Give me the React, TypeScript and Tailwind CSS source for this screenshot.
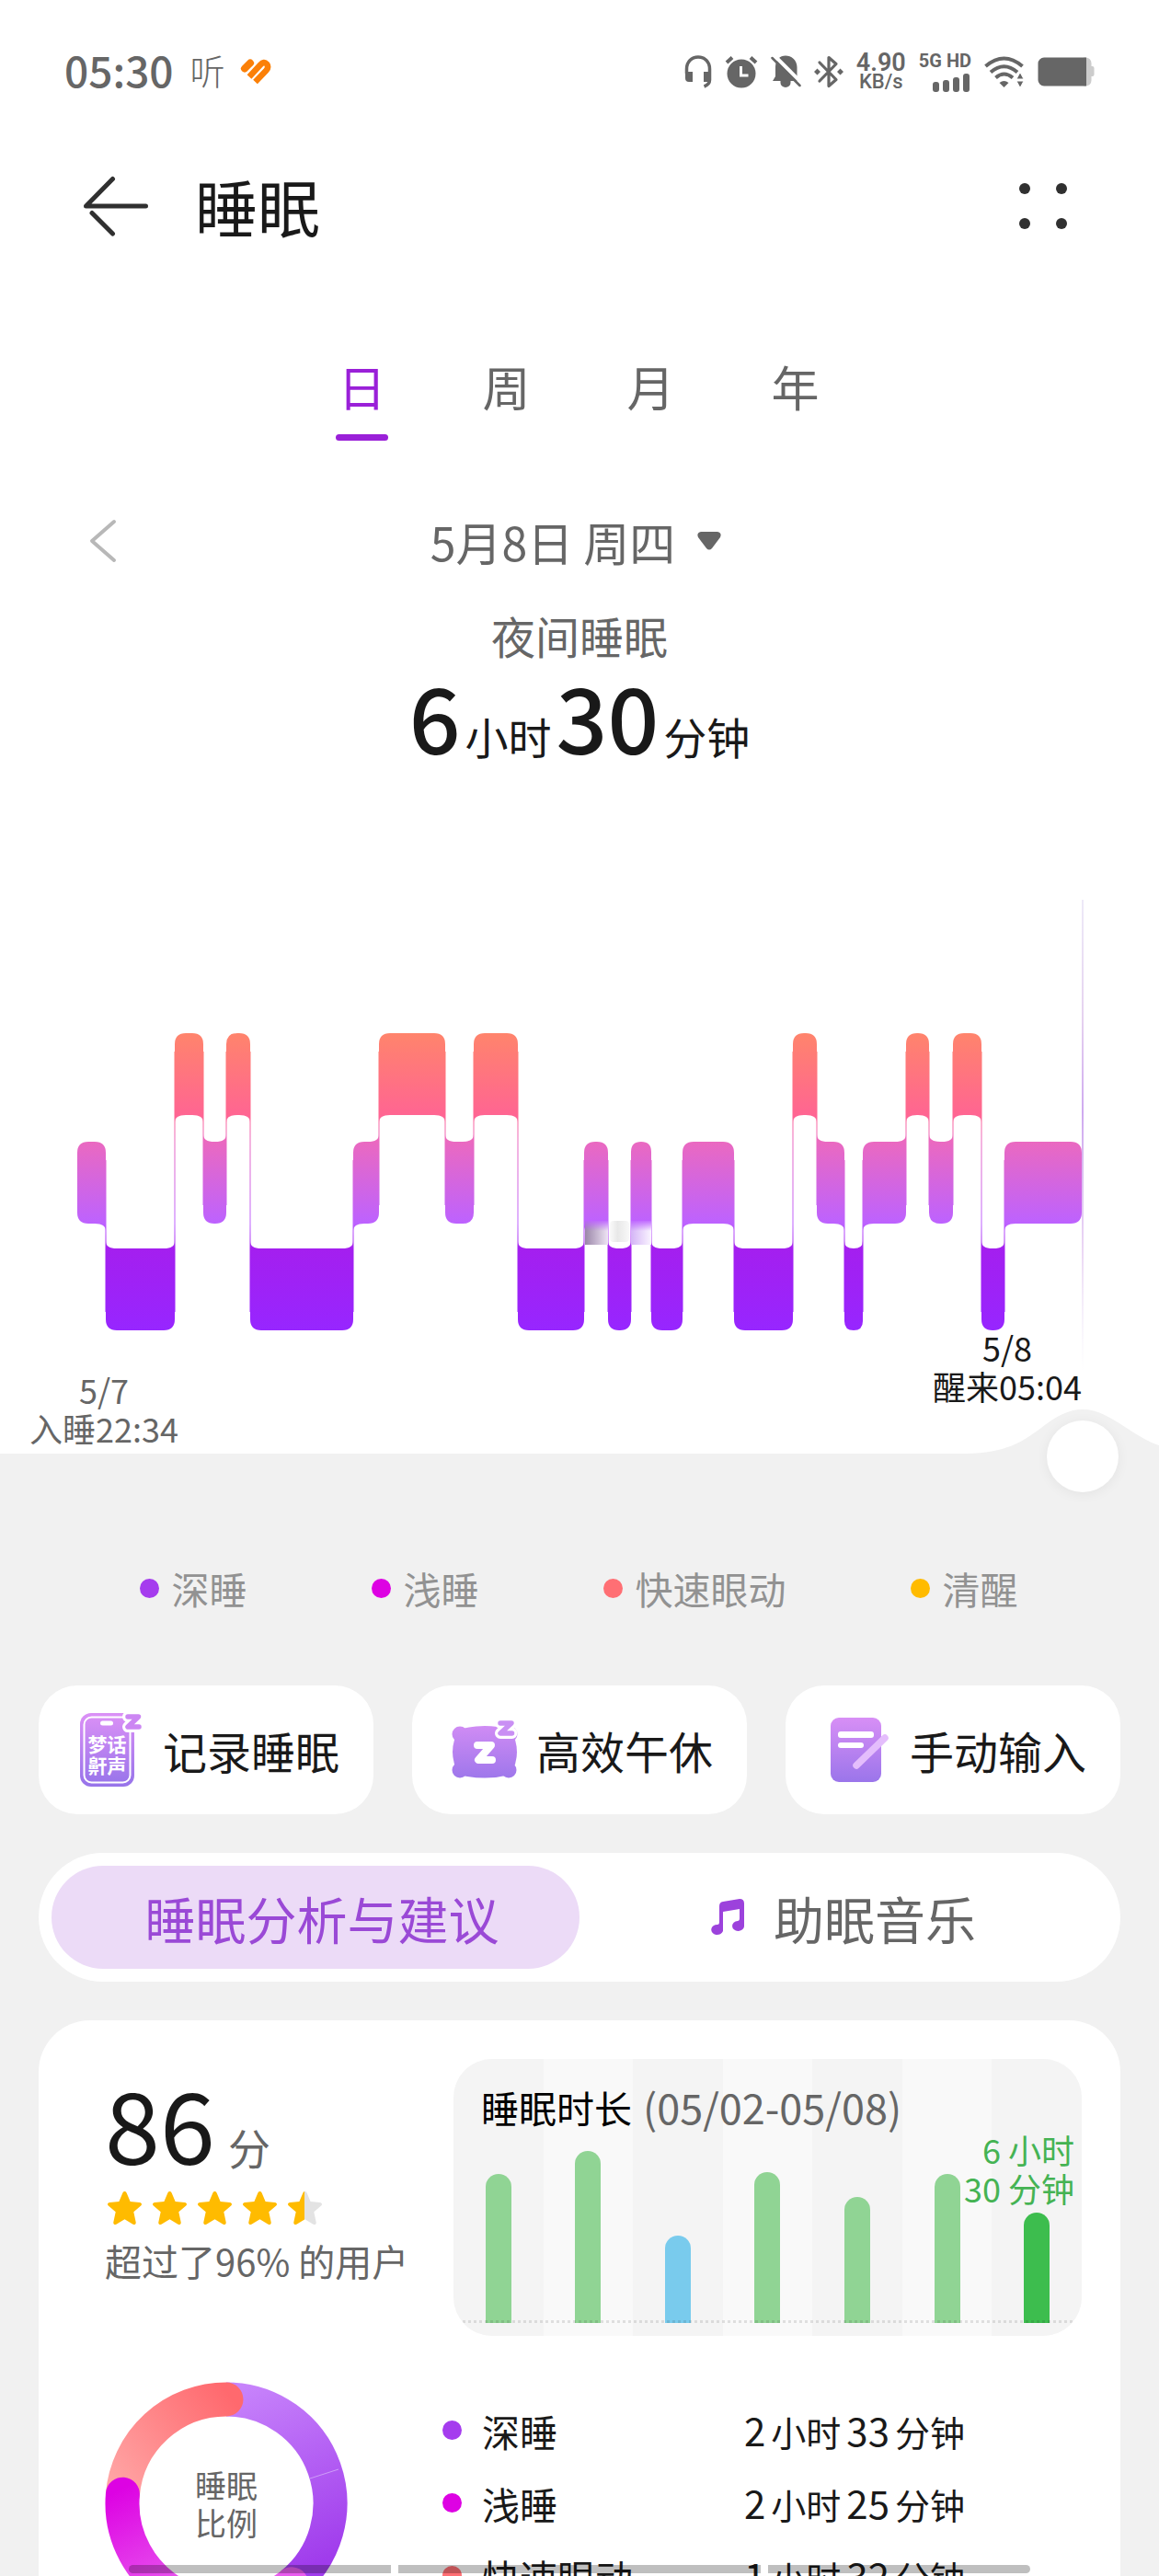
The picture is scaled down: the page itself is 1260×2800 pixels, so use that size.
import React from "react";

type Level = 0 | 1 | 2;

const LEVELS: Record<Level, [number, number]> = {
  0: [1123, 1212],
  1: [1241, 1330],
  2: [1357, 1446],
};

// Start of each sleep phase along the time axis, with its level (0 REM, 1 light, 2 deep).
const PHASES: [number, Level][] = [
  [84, 1], [115, 2], [190, 0], [221, 1], [246, 0], [272, 2], [384, 1], [412, 0],
  [484, 1], [515, 0], [563, 2], [635, 1], [661, 2], [686, 1], [708, 2], [742, 1],
  [798, 2], [862, 0], [888, 1], [918, 2], [938, 1], [985, 0], [1010, 1], [1036, 0],
  [1067, 2], [1092, 1],
];
const PHASE_END = 1176;

// A bar's corner flares towards a neighbour on another level and is rounded elsewhere.
function phasePath(i: number): string {
  const [x0, level] = PHASES[i];
  const x1 = i + 1 < PHASES.length ? PHASES[i + 1][0] : PHASE_END;
  const [t, b] = LEVELS[level];
  const r = Math.min(12, (x1 - x0) / 2);
  const prev = i > 0 ? PHASES[i - 1][1] : level;
  const next = i + 1 < PHASES.length ? PHASES[i + 1][1] : level;
  const f = 8;
  const tl = prev < level ? t - f : t + r;
  const tr = next < level ? t - f : t + r;
  const bl = prev > level ? b + f : b - r;
  const br = next > level ? b + f : b - r;
  return `M${x0} ${tl}Q${x0} ${t} ${x0 + r} ${t}H${x1 - r}Q${x1} ${t} ${x1} ${tr}V${br}Q${x1} ${b} ${x1 - r} ${b}H${x0 + r}Q${x0} ${b} ${x0} ${bl}Z`;
}

function Hypnogram() {
  return (
    <svg viewBox="0 970 1260 476" className="block w-full overflow-visible" role="img" aria-label="夜间睡眠阶段">
      <defs>
        <linearGradient id="phase" gradientUnits="userSpaceOnUse" x1="0" y1="1123" x2="0" y2="1446">
          <stop offset="0" stopColor="#ff846c" />
          <stop offset="0.275" stopColor="#ff6592" />
          <stop offset="0.365" stopColor="#ea69c0" />
          <stop offset="0.64" stopColor="#bd62ff" />
          <stop offset="0.725" stopColor="#a41fef" />
          <stop offset="1" stopColor="#9726ff" />
        </linearGradient>
        <linearGradient id="marker" x1="0" y1="0" x2="0" y2="1">
          <stop offset="0" stopColor="#e6e0f5" stopOpacity="0.7" />
          <stop offset="0.25" stopColor="#e6d2f0" />
          <stop offset="0.45" stopColor="#cfaaf0" />
          <stop offset="0.75" stopColor="#ecd8f5" />
          <stop offset="1" stopColor="#eeeaf8" stopOpacity="0" />
        </linearGradient>
        <linearGradient id="smudgeA" x1="0" y1="0" x2="1" y2="0">
          <stop offset="0" stopColor="#9a86a8" />
          <stop offset="1" stopColor="#eee4f4" />
        </linearGradient>
        <linearGradient id="smudgeMid" x1="0" y1="0" x2="1" y2="0">
          <stop offset="0" stopColor="#fafafa" />
          <stop offset="0.4" stopColor="#e8e8e8" />
          <stop offset="1" stopColor="#f8f8f8" />
        </linearGradient>
        <linearGradient id="smudgeB" x1="0" y1="0" x2="1" y2="0">
          <stop offset="0" stopColor="#d4b4f6" />
          <stop offset="1" stopColor="#faf5ff" />
        </linearGradient>
        <linearGradient id="smudgeC" x1="0" y1="0" x2="0" y2="1">
          <stop offset="0" stopColor="#bd62ff" />
          <stop offset="1" stopColor="#bd62ff" stopOpacity="0" />
        </linearGradient>
      </defs>
      <g fill="url(#phase)">
        {PHASES.map((_, i) => (
          <path key={i} d={phasePath(i)} />
        ))}
        {PHASES.slice(1).map(([x, level], i) => {
          const other = PHASES[i][1];
          const top = LEVELS[Math.min(level, other) as Level][0] + 20;
          const bottom = LEVELS[Math.max(level, other) as Level][1] - 20;
          return <rect key={x} x={x - 0.5} y={top} width="1" height={bottom - top} />;
        })}
      </g>
      <rect x="636" y="1327" width="25" height="26" fill="url(#smudgeA)" />
      <rect x="663" y="1327" width="21" height="23" rx="4" fill="url(#smudgeMid)" />
      <rect x="686" y="1327" width="22" height="26" fill="url(#smudgeB)" />
      <rect x="636" y="1326" width="25" height="12" fill="url(#smudgeC)" />
      <rect x="686" y="1326" width="22" height="12" fill="url(#smudgeC)" />
      <rect x="1176" y="978" width="2" height="512" fill="url(#marker)" />
    </svg>
  );
}

function StatusBar() {
  return (
    <div className="flex h-[156px] items-center justify-between px-[70px] text-[#666]">
      <div className="flex items-center">
        <span className="pb-[6px] text-[46px] font-medium leading-none">05:30</span>
        <span className="ml-[18px] pb-[4px] text-[38px] font-light leading-none">听</span>
        <svg width="34" height="30" viewBox="262 62 34 30" className="ml-[16px]" fill="none" stroke="#fb8008" strokeLinecap="round" strokeLinejoin="round" aria-hidden="true">
          <path d="M267 73.500 273 67.500" strokeWidth="8" />
          <path d="M272 82.500 284 69.500Q288 65 291 68.500 293.500 72 290.500 75.500L278.500 88" strokeWidth="6.500" strokeLinecap="butt" />
        </svg>
      </div>
      <div className="flex items-center gap-[14px]">
        <svg width="30" height="36" viewBox="0 0 30 36" fill="none" stroke="currentColor" aria-hidden="true">
          <path d="M2.500 20V15C2.500 7 8 2 15 2s12.500 5 12.500 13v12c0 4-2 5.500-6 7" strokeWidth="3.500" />
          <path d="M1 18h8v11H5a4 4 0 0 1-4-4zM21 18h8v9l-3 2h-5z" fill="currentColor" stroke="none" />
        </svg>
        <svg width="36" height="36" viewBox="0 0 36 36" fill="none" stroke="currentColor" aria-hidden="true">
          <circle cx="18" cy="20" r="15.500" fill="currentColor" stroke="none" />
          <path d="M2 8 8 2.500M34 8 28 2.500" strokeWidth="4" />
          <path d="M17.500 12v10h8" stroke="#fff" strokeWidth="3" />
        </svg>
        <svg width="33" height="36" viewBox="0 0 33 36" fill="none" aria-hidden="true">
          <path d="M16 .5C22 .5 28.500 5 28.500 13v11l2 4H2l3-5V13C5 5 10 .5 16 .5zM10.500 28h11v2a5.500 5 0 0 1-11 0z" fill="currentColor" />
          <path d="M3.500 0 35 31.500" stroke="#fff" strokeWidth="4" />
          <path d="M1.500 3 31.500 33" stroke="currentColor" strokeWidth="2.500" strokeLinecap="round" />
        </svg>
        <svg width="32" height="36" viewBox="0 0 32 36" fill="none" stroke="currentColor" aria-hidden="true">
          <path d="M6 8 24 26.500 16 33.500V2.500L24 9.500 6 28" strokeWidth="3.200" strokeLinejoin="round" strokeLinecap="round" />
          <path d="M3.500 14.500 7 18 3.500 21.500 0 18zM28.500 14.500 32 18 28.500 21.500 25 18z" fill="currentColor" stroke="none" />
        </svg>
        <div className="flex flex-col items-center font-['Roboto','Noto_Sans_CJK_SC',sans-serif] font-semibold">
          <span className="text-[27px] leading-[22px]">4.90</span>
          <span className="text-[22px] font-medium leading-[20px]">KB/s</span>
        </div>
        <div className="flex flex-col items-end gap-[5px]">
          <span className="font-['Roboto','Noto_Sans_CJK_SC',sans-serif] text-[20px] font-bold leading-[18px]">5G HD</span>
          <svg width="42" height="20" viewBox="0 0 42 20" fill="currentColor" aria-hidden="true">
            <rect x="0" y="9" width="7" height="11" rx="3" />
            <rect x="11" y="7" width="7" height="13" rx="3" />
            <rect x="22" y="4" width="7" height="16" rx="3" />
            <rect x="33" y="0" width="7" height="20" rx="3" />
          </svg>
        </div>
        <svg width="44" height="36" viewBox="0 0 44 36" fill="none" stroke="currentColor" aria-hidden="true">
          <path d="M1.500 12Q21.500-5 41.500 12" strokeWidth="4" />
          <path d="M7 18.500Q21.500 6 36 18.500" strokeWidth="4" />
          <path d="M12.500 24.500Q21.500 16.500 31 24.500" strokeWidth="4" />
          <path d="M16.500 30q5-4 10 0l-5 5z" fill="currentColor" stroke="none" />
          <path d="M35 26 39 18.500 43 26zM35 28 39 35.500 43 28z" fill="currentColor" stroke="#fff" strokeWidth="1" />
        </svg>
        <svg width="62" height="32" viewBox="0 0 62 32" aria-hidden="true">
          <path d="M50 .5h2.500a6 6 0 0 1 6 6v3.500h1a2 2 0 0 1 2 2v7a2 2 0 0 1-2 2h-1v4.500a6 6 0 0 1-6 6H50z" fill="#ccc" />
          <path d="M7 .5h46v31H7a6.500 6.500 0 0 1-6.500-6.500V7A6.500 6.500 0 0 1 7 .5z" fill="currentColor" />
        </svg>
      </div>
    </div>
  );
}

const iconGradient = (id: string) => (
  <linearGradient id={id} gradientUnits="userSpaceOnUse" x1="0" y1="4" x2="0" y2="80">
    <stop offset="0" stopColor="#da90f6" />
    <stop offset="1" stopColor="#9874ea" />
  </linearGradient>
);

function RecordIcon() {
  return (
    <svg width="84" height="84" viewBox="0 0 84 84" fill="none" aria-hidden="true">
      <defs>{iconGradient("recordFill")}</defs>
      <rect x="8" y="2" width="59" height="80" rx="12" fill="url(#recordFill)" />
      <rect x="12.500" y="6.500" width="50" height="71" rx="8" stroke="#fff" strokeWidth="2" />
      <rect x="30" y="10.500" width="14" height="5" rx="2.500" fill="#fff" />
      <text x="37.500" y="44" fontSize="21" fontWeight="700" textAnchor="middle" fill="#fff">梦话</text>
      <text x="37.500" y="67" fontSize="21" fontWeight="700" textAnchor="middle" fill="#fff">鼾声</text>
      <path d="M60 6H71.500L60 17H72" stroke="#fff" strokeWidth="12" strokeLinejoin="round" strokeLinecap="round" />
      <path d="M60 6H71.500L60 17H72" stroke="#cc86f3" strokeWidth="5.500" strokeLinejoin="round" strokeLinecap="round" />
    </svg>
  );
}

function NapIcon() {
  return (
    <svg width="84" height="84" viewBox="0 0 84 84" fill="none" aria-hidden="true">
      <defs>{iconGradient("napFill")}</defs>
      <g fill="url(#napFill)">
        <circle cx="15" cy="25" r="8.500" />
        <circle cx="69" cy="25" r="8.500" />
        <circle cx="15" cy="64" r="8.500" />
        <circle cx="68" cy="64" r="8.500" />
        <path d="M14 20Q42 12 70 20 84 44 70 69 42 76 14 69 0 44 14 20z" />
      </g>
      <path d="M34 37H49L35 53H50" stroke="#fff" strokeWidth="8" strokeLinejoin="round" strokeLinecap="round" />
      <path d="M59 13H71L59 24H71.500" stroke="#fff" strokeWidth="12" strokeLinejoin="round" strokeLinecap="round" />
      <path d="M59 13H71L59 24H71.500" stroke="#c98ff4" strokeWidth="5.500" strokeLinejoin="round" strokeLinecap="round" />
    </svg>
  );
}

function InputIcon() {
  return (
    <svg width="84" height="84" viewBox="0 0 84 84" fill="none" aria-hidden="true">
      <defs>{iconGradient("inputFill")}</defs>
      <rect x="12" y="7" width="55" height="70" rx="9" fill="url(#inputFill)" />
      <rect x="20" y="22" width="39" height="7" rx="3" fill="#fff" />
      <rect x="20" y="34" width="28" height="6" rx="3" fill="#fff" />
      <path d="M40 59 71 29" stroke="#e4bdfc" strokeWidth="7.500" strokeLinecap="round" />
    </svg>
  );
}

function MusicIcon() {
  return (
    <svg width="36" height="40" viewBox="0 0 36 40" fill="#9c42dc" aria-hidden="true">
      <path d="M9 8Q9 3.500 13 3L31 0Q36 0 36 5V30H31V11L13 14V34H9z" />
      <path d="M13 26V35A6.500 5.500 0 1 1 7 28Q9 28 9 25zM36 22V30A6.500 5.500 0 1 1 29 24Q31 24 31 21z" />
    </svg>
  );
}

const LEGEND = [
  { label: "深睡", dot: "bg-[#a53cee]" },
  { label: "浅睡", dot: "bg-[#dd02e3]" },
  { label: "快速眼动", dot: "bg-[#ff6f74]" },
  { label: "清醒", dot: "bg-[#ffbb00]" },
];

const ACTIONS = [
  { label: "记录睡眠", icon: <RecordIcon /> },
  { label: "高效午休", icon: <NapIcon /> },
  { label: "手动输入", icon: <InputIcon /> },
];

const WEEK = [
  { day: "05/02", bar: "h-[162px] bg-[#90d494]" },
  { day: "05/03", bar: "h-[187px] bg-[#90d494]" },
  { day: "05/04", bar: "h-[95px] bg-[#79cbed]" },
  { day: "05/05", bar: "h-[164px] bg-[#90d494]" },
  { day: "05/06", bar: "h-[137px] bg-[#90d494]" },
  { day: "05/07", bar: "h-[162px] bg-[#90d494]" },
  { day: "05/08", bar: "h-[120px] bg-[#3dbd4e]" },
];

const SHARES = [
  { label: "深睡", dot: "bg-[#a53cee]", hours: 2, minutes: 33 },
  { label: "浅睡", dot: "bg-[#dd02e3]", hours: 2, minutes: 25 },
  { label: "快速眼动", dot: "bg-[#ff6f74]", hours: 1, minutes: 32 },
];

const STAR = "M18.500 0c1 0 1.700.6 2.100 1.500l4 9.500 10.300.9c2.100.2 2.800 2.300 1.300 3.600l-7.900 6.800 2.400 11.100c.4 2-1.400 3.300-3.100 2.300l-9.100-5.500-9.100 5.500c-1.700 1-3.500-.3-3.100-2.300l2.400-11.100L.8 15.500C-.7 14.200 0 12.100 2.100 11.900L12.400 11l4-9.500C16.800.6 17.500 0 18.500 0z";

function Stars() {
  return (
    <div className="flex gap-[12px]" role="img" aria-label="4.5 星">
      {[0, 1, 2, 3, 4].map((i) => (
        <svg key={i} width="37" height="37" viewBox="0 0 37 37" aria-hidden="true">
          <defs>
            <linearGradient id="half">
              <stop offset="0.5" stopColor="#ffbb00" />
              <stop offset="0.5" stopColor="#e3e3e3" />
            </linearGradient>
          </defs>
          <path d={STAR} fill={i === 4 ? "url(#half)" : "#ffbb00"} />
        </svg>
      ))}
    </div>
  );
}

const R = 113;
const at = (deg: number) => {
  const a = (deg * Math.PI) / 180;
  return `${132 + R * Math.sin(a)} ${132 - R * Math.cos(a)}`;
};
const arc = (from: number, to: number) => `M${at(from)}A${R} ${R} 0 ${to - from > 180 ? 1 : 0} 1 ${at(to)}`;

function Donut() {
  return (
    <div className="relative h-[264px] w-[264px] shrink-0">
      <svg viewBox="0 0 264 264" className="block h-full w-full" fill="none" strokeWidth="37" aria-hidden="true">
        <defs>
          <linearGradient id="deepArc" gradientUnits="userSpaceOnUse" x1="140" y1="10" x2="225" y2="200">
            <stop offset="0" stopColor="#c783fb" />
            <stop offset="1" stopColor="#a03cec" />
          </linearGradient>
          <linearGradient id="lightArc" gradientUnits="userSpaceOnUse" x1="20" y1="115" x2="80" y2="230">
            <stop offset="0" stopColor="#dd02e3" />
            <stop offset="1" stopColor="#e85cee" />
          </linearGradient>
          <linearGradient id="remArc" gradientUnits="userSpaceOnUse" x1="15" y1="120" x2="140" y2="20">
            <stop offset="0" stopColor="#ffa5a5" />
            <stop offset="1" stopColor="#ff696e" />
          </linearGradient>
        </defs>
        <path d={arc(0, 141)} stroke="url(#deepArc)" />
        <path d="M223 105 254 95" stroke="#cf9df8" strokeWidth="1" />
        <path d={arc(275, 360)} stroke="url(#remArc)" strokeLinecap="round" />
        <path d={arc(141, 275)} stroke="url(#lightArc)" strokeLinecap="round" />
      </svg>
      <div className="absolute inset-0 flex flex-col items-center justify-center text-[34px] leading-[41px] text-[#666]">
        <span>睡眠</span>
        <span>比例</span>
      </div>
    </div>
  );
}

export default function App() {
  return (
    <div className="relative h-screen overflow-hidden bg-white font-['Noto_Sans_CJK_SC',sans-serif] text-[#191919]">
      <StatusBar />

      <header className="flex h-[136px] items-center justify-between pl-[90px] pr-[100px]">
        <div className="flex items-center gap-[50px]">
          <button type="button" aria-label="返回">
            <svg width="72" height="66" viewBox="90 191 72 66" fill="none" stroke="#303030" strokeWidth="5" strokeLinecap="round" strokeLinejoin="round" className="block">
              <path d="M158.500 224H93.500L122.500 194.500" />
              <path d="M100 231.500 122.500 254" />
            </svg>
          </button>
          <h1 className="text-[68px] leading-[80px]">睡眠</h1>
        </div>
        <button type="button" aria-label="更多" className="grid grid-cols-2 gap-x-[28px] gap-y-[26px]">
          {[0, 1, 2, 3].map((i) => (
            <span key={i} className="h-[12px] w-[12px] rounded-full bg-[#303030]" />
          ))}
        </button>
      </header>

      <nav className="mt-[90px] flex justify-center gap-[100px] pr-[2px] text-[52px] leading-[76px] text-[#666]">
        <button type="button" aria-current="page" className="w-[57px] text-[#9a20d8]">
          日
          <span className="mt-[14px] block h-[7px] rounded-full bg-[#9a20d8]" />
        </button>
        <button type="button" className="flex w-[57px] justify-center">周</button>
        <button type="button" className="flex w-[57px] justify-center">月</button>
        <button type="button" className="flex w-[57px] justify-center">年</button>
      </nav>

      <div className="mt-[73px] grid h-[72px] grid-cols-[80px_1fr_80px] items-center px-[94px]">
        <button type="button" aria-label="前一天">
          <svg width="34" height="50" viewBox="0 0 34 50" fill="none" stroke="#b8b8b8" strokeWidth="4" strokeLinecap="round" strokeLinejoin="round" className="block">
            <path d="M30 4 6 25 30 46" />
          </svg>
        </button>
        <button type="button" className="flex items-center justify-center gap-[24px] pr-[8px] text-[50px] leading-[72px] text-[#666]">
          5月8日 周四
          <svg width="26" height="20" viewBox="0 0 26 20" fill="#666" aria-hidden="true">
            <path d="M4 0h18q5 1 3 6l-9 12q-3 3-6 0L1 6Q-1 1 4 0z" />
          </svg>
        </button>
      </div>

      <section className="mt-[34px] flex flex-col items-center">
        <h2 className="text-[48px] leading-[64px] text-[#666]">夜间睡眠</h2>
        <p className="mt-[5px] flex h-[100px] items-baseline gap-[5px] text-[47px] leading-[100px]">
          <span className="text-[98px] font-medium">6</span>
          <span>小时</span>
          <span className="text-[98px] font-medium">30</span>
          <span>分钟</span>
        </p>
      </section>

      <section className="mt-[143px]">
        <Hypnogram />
        <div className="relative -mt-[3px] flex h-[137px] items-start justify-between pl-[32px] pr-[84px] text-[36px] leading-[42px]">
          <p className="mt-[46px] text-center text-[#666]">
            5/7
            <br />
            入睡22:34
          </p>
          <p className="text-center">
            5/8
            <br />
            醒来05:04
          </p>
          <svg width="210" height="48" viewBox="0 0 210 48" className="absolute bottom-0 right-0" fill="#f1f1f1" aria-hidden="true">
            <path d="M0 48C44 47 60 36 82 20 98 7 112 0 127 0 144 0 156 8 176 21 190 30 200 36 210 39V48z" />
          </svg>
        </div>
      </section>

      <main className="bg-[#f1f1f1] px-[42px]">
        <input
          type="range"
          aria-label="睡眠时刻"
          min={0}
          max={390}
          defaultValue={390}
          className="relative -top-[36px] -mb-[36px] block h-[78px] w-full appearance-none bg-transparent pr-[2px] [&::-webkit-slider-thumb]:h-[78px] [&::-webkit-slider-thumb]:w-[78px] [&::-webkit-slider-thumb]:appearance-none [&::-webkit-slider-thumb]:rounded-full [&::-webkit-slider-thumb]:bg-white [&::-webkit-slider-thumb]:shadow-[0_2px_14px_rgba(0,0,0,0.06)]"
        />

        <ul className="flex justify-center gap-[135px] pr-[2px] pt-[76px] text-[41px] leading-[56px] text-[#929292]">
          {LEGEND.map((item) => (
            <li key={item.label} className="flex items-center gap-[14px]">
              <span className={`h-[21px] w-[21px] rounded-full ${item.dot}`} />
              {item.label}
            </li>
          ))}
        </ul>

        <div className="mt-[78px] grid grid-cols-3 gap-[42px]">
          {ACTIONS.map((action) => (
            <button key={action.label} type="button" className="flex h-[140px] items-center justify-center gap-[14px] rounded-[42px] bg-white text-[48px]">
              {action.icon}
              {action.label}
            </button>
          ))}
        </div>

        <div className="mt-[42px] flex h-[140px] rounded-full bg-white p-[14px] text-[55px]">
          <button type="button" aria-pressed="true" className="flex w-1/2 items-center justify-center rounded-full bg-[#ecdbf7] pl-[14px] text-[#9a49d6]">
            睡眠分析与建议
          </button>
          <button type="button" aria-pressed="false" className="flex w-1/2 items-center justify-center gap-[32px] text-[#666]">
            <MusicIcon />
            助眠音乐
          </button>
        </div>

        <section className="mt-[42px] rounded-[56px] bg-white pb-[80px] pl-[72px] pr-[42px] pt-[42px]">
          <div className="flex">
            <div className="w-[379px] shrink-0 pt-[18px]">
              <p className="flex h-[100px] items-baseline gap-[14px] leading-[100px]">
                <span className="text-[108px]">86</span>
                <span className="text-[46px] text-[#666]">分</span>
              </p>
              <div className="pl-[3px] pt-[26px]">
                <Stars />
              </div>
              <p className="mt-[14px] text-[40px] leading-[48px] text-[#666]">超过了96% 的用户</p>
            </div>

            <div className="relative h-[301px] flex-1 overflow-hidden rounded-[42px] bg-[#f9f9f9]">
              <div className="grid h-full grid-cols-7">
                {WEEK.map(({ day, bar }) => (
                  <div key={day} className="flex items-end justify-center pb-[14px] odd:bg-[#f4f4f4]">
                    <div className={`w-[28px] rounded-t-full ${bar}`} />
                  </div>
                ))}
              </div>
              <div className="absolute inset-x-[10px] bottom-[14px] border-b-[3px] border-dotted border-black/10" />
              <h3 className="absolute left-[30px] top-[24px] flex items-center gap-[12px] text-[41px] leading-[56px] text-black">
                睡眠时长
                <span className="text-[45px] text-[#666]">(05/02-05/08)</span>
              </h3>
              <p className="absolute right-[8px] top-[77px] text-right text-[36px] leading-[42px] text-[#45b353]">
                6 小时
                <br />
                30 分钟
              </p>
            </div>
          </div>

          <div className="mt-[50px] flex gap-[103px]">
            <Donut />
            <table className="mt-[13px] flex-1 self-start text-left">
              <tbody>
                {SHARES.map((s) => (
                  <tr key={s.label} className="h-[79px]">
                    <th scope="row" className="w-[328px] p-0 text-[41px] font-normal leading-[56px]">
                      <span className="flex items-center gap-[22px]">
                        <span className={`h-[21px] w-[21px] rounded-full ${s.dot}`} />
                        {s.label}
                      </span>
                    </th>
                    <td className="p-0">
                      <span className="flex items-baseline gap-[6px] text-[38px] leading-[56px]">
                        <span className="text-[42px]">{s.hours}</span>
                        <span>小时</span>
                        <span className="text-[42px]">{s.minutes}</span>
                        <span>分钟</span>
                      </span>
                    </td>
                  </tr>
                ))}
              </tbody>
            </table>
          </div>
        </section>
      </main>

      <div className="absolute inset-x-[140px] bottom-[3px] flex h-[9px] gap-[8px]" aria-hidden="true">
        <span className="flex-[285] rounded-l-full bg-black/25" />
        <span className="flex-[395] bg-black/25" />
        <span className="flex-[285] rounded-r-full bg-black/25" />
      </div>
    </div>
  );
}
